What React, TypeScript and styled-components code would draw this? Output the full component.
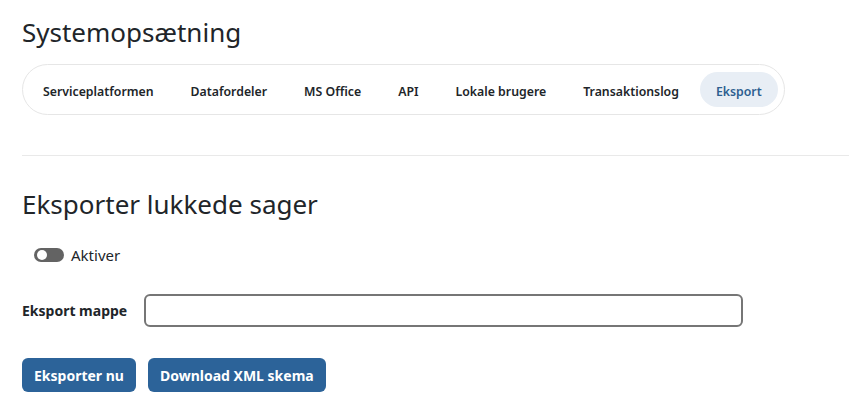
import React from "react";
import styled, { createGlobalStyle } from "styled-components";

const Global = createGlobalStyle`
  html, body { margin: 0; padding: 0; background: #fff; }
  body { font-family: "Noto Sans", "Open Sans", sans-serif; color: #212529; }
  * { box-sizing: border-box; }
`;

const Page = styled.div`
  padding: 0 0 0 22px;
  display: flex;
  flex-direction: column;
`;

const Title = styled.h1`
  margin: 12px 0 0;
  font-size: 26px;
  font-weight: 400;
  line-height: 40px;
`;

const TabBar = styled.nav`
  margin-top: 12px;
  align-self: flex-start;
  display: flex;
  align-items: center;
  gap: 5px;
  height: 51px;
  padding: 0 6px 0 4px;
  border: 1px solid #e6e6e6;
  border-radius: 26px;
`;

const Tab = styled.span<{ $active?: boolean }>`
  display: flex;
  align-items: center;
  height: 35px;
  padding: 3px 16px 0;
  border-radius: 18px;
  font-size: 12.3px;
  font-weight: 600;
  color: ${(p) => (p.$active ? "#2d5f90" : "#212529")};
  background: ${(p) => (p.$active ? "#e8eef5" : "transparent")};
  white-space: nowrap;
`;

const Divider = styled.hr`
  margin: 40px 0 0;
  border: 0;
  border-top: 1px solid #e9e9e9;
`;

const Heading = styled.h2`
  margin: 30px 0 0;
  font-size: 26px;
  font-weight: 400;
  line-height: 36px;
`;

const ToggleRow = styled.label`
  display: flex;
  align-items: center;
  gap: 7px;
  margin: 22px 0 0 12px;
  font-size: 15px;
  height: 22px;
`;

const Track = styled.span`
  position: relative;
  width: 30px;
  height: 14px;
  border-radius: 7px;
  background: #636363;
`;

const Knob = styled.span`
  position: absolute;
  left: 3px;
  top: 2px;
  width: 10px;
  height: 10px;
  border-radius: 50%;
  background: #fff;
`;

const FieldRow = styled.div`
  display: flex;
  align-items: center;
  gap: 17px;
  margin-top: 28px;
`;

const Label = styled.span`
  font-size: 14px;
  font-weight: 700;
`;

const Input = styled.input`
  width: 599px;
  height: 33px;
  border: 2px solid #767676;
  border-radius: 6px;
  font: inherit;
`;

const Buttons = styled.div`
  display: flex;
  gap: 12px;
  margin-top: 31px;
`;

const Button = styled.button`
  height: 34px;
  padding: 0 12px;
  border: 0;
  border-radius: 6px;
  background: #2c6399;
  color: #fff;
  font-family: inherit;
  font-size: 14px;
  font-weight: 700;
`;

const tabs = [
  "Serviceplatformen",
  "Datafordeler",
  "MS Office",
  "API",
  "Lokale brugere",
  "Transaktionslog",
  "Eksport",
];

export default function App() {
  return (
    <>
      <Global />
      <Page>
        <Title>Systemopsætning</Title>
        <TabBar>
          {tabs.map((t) => (
            <Tab key={t} $active={t === "Eksport"}>
              {t}
            </Tab>
          ))}
        </TabBar>
        <Divider />
        <Heading>Eksporter lukkede sager</Heading>
        <ToggleRow>
          <Track>
            <Knob />
          </Track>
          Aktiver
        </ToggleRow>
        <FieldRow>
          <Label>Eksport mappe</Label>
          <Input />
        </FieldRow>
        <Buttons>
          <Button>Eksporter nu</Button>
          <Button>Download XML skema</Button>
        </Buttons>
      </Page>
    </>
  );
}
